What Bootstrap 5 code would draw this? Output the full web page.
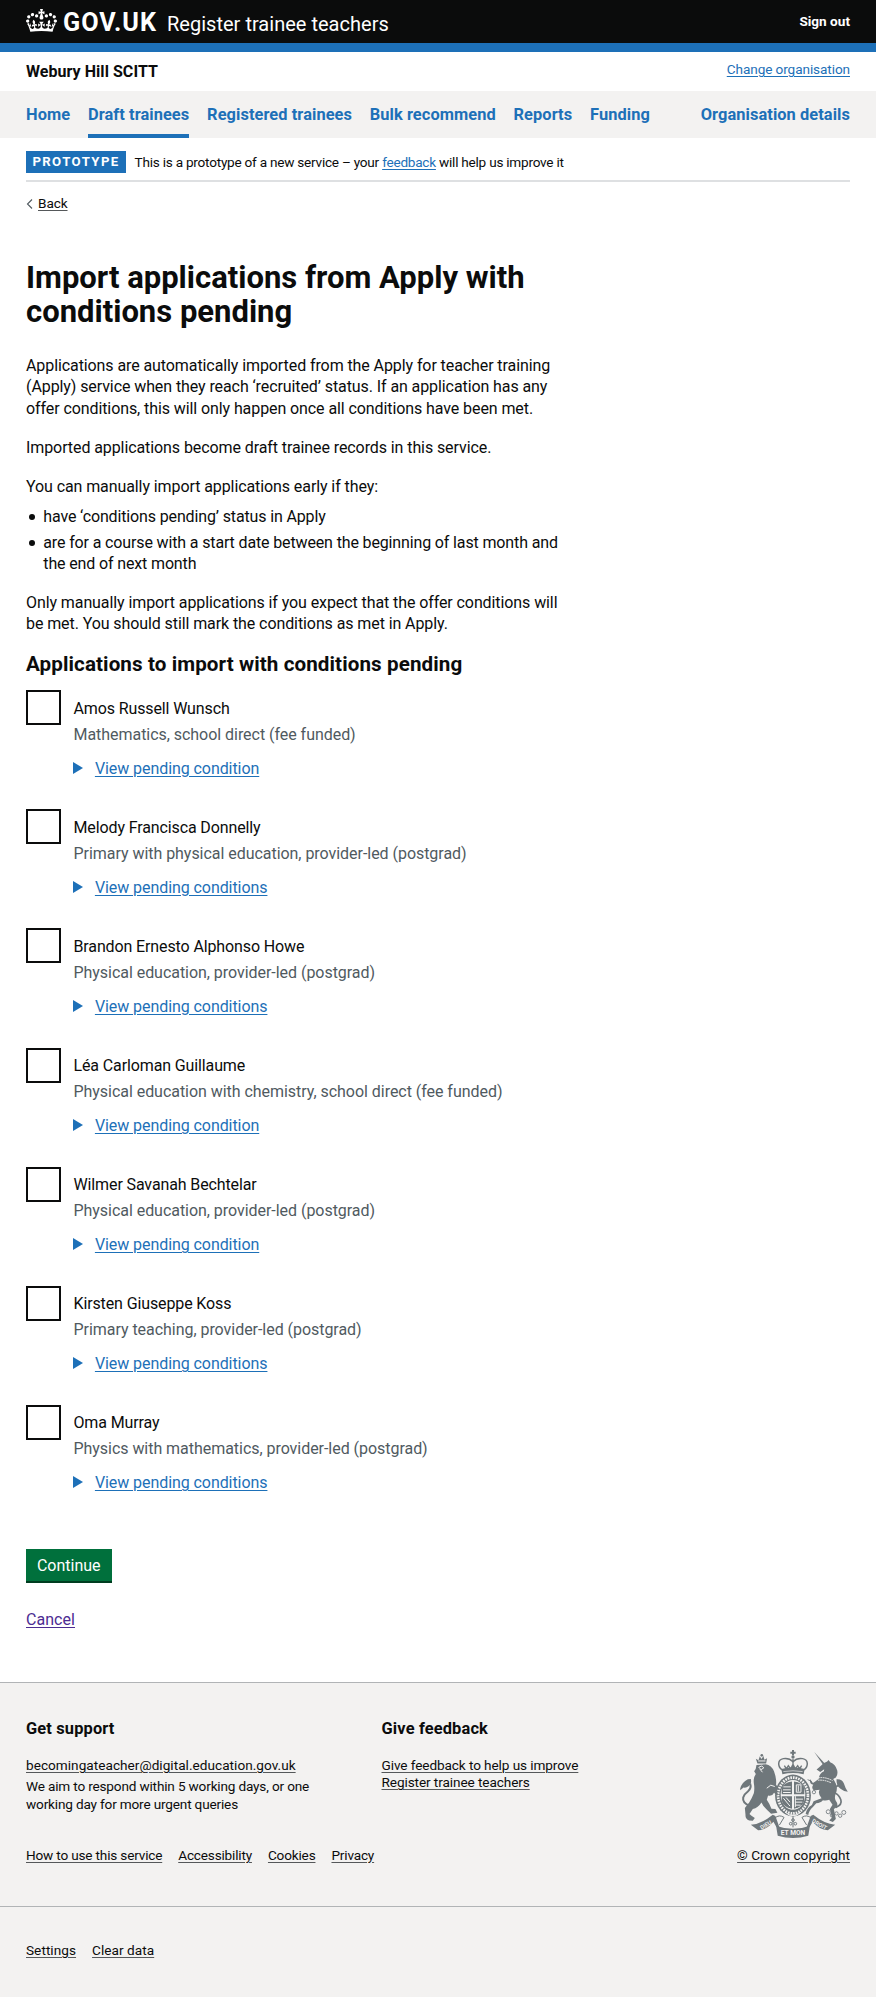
<!DOCTYPE html>
<html lang="en">
<head>
<meta charset="utf-8">
<meta name="viewport" content="width=device-width, initial-scale=1">
<title>Import applications from Apply with conditions pending</title>
<link href="https://cdn.jsdelivr.net/npm/bootstrap@5.3.0/dist/css/bootstrap.min.css" rel="stylesheet">
<style>
body{font-family:Roboto,"Liberation Sans",sans-serif;font-size:16px;line-height:21.5px;letter-spacing:-.09px;color:#0b0c0c;background:#fff}
a{color:#1d70b8;text-underline-offset:2px;text-decoration-thickness:1px}
.page{padding-left:26px;padding-right:26px}
.top-bar{background:#0b0c0c;height:52px;border-bottom:9px solid #1d70b8;color:#fff}
.crown{width:31px;height:23px;margin-top:9px}
.wordmark{font-size:25.2px;font-weight:700;line-height:30px;letter-spacing:1px;margin:7.5px 0 0 6px}
.service{font-size:20px;line-height:26px;letter-spacing:.02px;margin:11px 0 0 10px}
.signout{font-size:13.6px;letter-spacing:0;margin-top:11px;color:#fff;font-weight:700}
.org-bar{height:39px;padding-top:8.6px}
.org-name{letter-spacing:.05px}
.txt-sm{font-size:13.6px;line-height:17.2px}
.main-nav{background:#f3f2f1;height:46.5px;gap:17.8px}
.main-nav a{font-weight:700;font-size:16.4px;letter-spacing:.07px;text-decoration:none;padding-top:13px;white-space:nowrap}
.main-nav a.current{border-bottom:4px solid #1d70b8}
.phase{height:44.5px;border-bottom:2px solid #dee0e2;margin:0 26px}
.phase .tag{background:#1d70b8;color:#fff;font-weight:700;font-size:13.2px;letter-spacing:1.4px;height:21.5px;line-height:22px;width:100px;text-align:center;margin-top:13.5px}
.phase .txt-sm{letter-spacing:-.24px;margin:16px 0 0 8.6px}
.back{padding-top:13px}
.back svg{margin-right:5px}
.back a,.foot a{color:#0b0c0c;text-decoration-color:#55585a}
.content{width:545px;padding-top:48.4px}
.content h1{font-size:31px;line-height:34.4px;letter-spacing:0;font-weight:700;margin:0 0 25.5px}
.content p{margin:0 0 17.3px}
.bul{list-style:none;padding:0;margin:-8.6px 0 17.3px}
.bul li{padding-left:17.3px;position:relative;letter-spacing:-.14px}
.bul li+li{margin-top:4.3px}
.bul li::before{content:"";position:absolute;left:3px;top:8px;width:6px;height:6px;border-radius:50%;background:#0b0c0c}
.content h2{font-size:20.6px;line-height:25.8px;letter-spacing:.1px;font-weight:700;margin:0 0 12.5px}
.applicant{height:119.05px;gap:12.9px}
.applicant .form-check-input{width:34.6px;height:35px;border:2px solid #0b0c0c;border-radius:0;margin:0;flex:none}
.applicant label{padding-top:7.3px;letter-spacing:-.12px}
.hint{color:#505a5f;margin-top:4.5px;letter-spacing:-.04px}
.more{margin-top:12.7px;letter-spacing:-.07px}
.more svg{display:inline-block;margin:-3px 12.3px 0 -.9px}
.btn-go,.btn-go:hover{background:#00703c;color:#fff}
.btn-go{border:0;border-radius:0;box-shadow:inset 0 -2px 0 #003d20;height:34.5px;width:85.5px;margin-top:25px;padding:0;font-size:16px;letter-spacing:0;line-height:21.5px}
.cancel{margin-top:26px;margin-bottom:51.6px}
.cancel a{color:#4c2c92;letter-spacing:.05px}
.foot{background:#f3f2f1;border-top:1px solid #b1b4b6}
.foot h3{font-size:16.4px;font-weight:700;letter-spacing:.15px;line-height:21.5px;margin:0 0 17.7px}
.foot-main{padding-top:34.3px;padding-bottom:42px}
.col-support{width:355.5px}
.reply{margin-top:4.3px;letter-spacing:-.17px}
.foot-links{gap:16px;letter-spacing:-.18px}
.meta{margin-top:34px}
.crest{width:108px;height:88px;margin-bottom:8.5px}
.foot-end{border-top:1px solid #b1b4b6;padding-top:34.9px;padding-bottom:37.5px;letter-spacing:.05px}
</style>
</head>
<body>
<header>
  <div class="top-bar page d-flex justify-content-between">
    <div class="d-flex">
      <svg class="crown" viewBox="0 0 132 97" fill="#fff" preserveAspectRatio="none" aria-hidden="true"><path fill-rule="evenodd" d="M25 30.2c3.5 1.5 7.7-.2 9.1-3.7 1.5-3.6-.2-7.8-3.9-9.2-3.6-1.4-7.6.3-9.1 3.9-1.4 3.5.3 7.5 3.9 9zM9 39.5c3.6 1.5 7.8-.2 9.2-3.7 1.5-3.6-.2-7.8-3.9-9.1-3.6-1.5-7.6.2-9.1 3.8-1.4 3.5.3 7.5 3.8 9zM4.4 57.2c3.5 1.5 7.7-.2 9.1-3.8 1.5-3.6-.2-7.7-3.9-9.1-3.5-1.5-7.6.3-9.1 3.8-1.4 3.5.3 7.6 3.9 9.1zm38.3-21.4c3.5 1.5 7.7-.2 9.1-3.8 1.5-3.6-.2-7.7-3.9-9.1-3.6-1.5-7.6.3-9.1 3.8-1.3 3.6.4 7.7 3.9 9.1zm64.4-5.6c-3.6 1.5-7.8-.2-9.1-3.7-1.5-3.6.2-7.8 3.8-9.2 3.6-1.4 7.7.3 9.2 3.9 1.3 3.5-.4 7.5-3.9 9zm15.9 9.3c-3.6 1.5-7.7-.2-9.1-3.7-1.5-3.6.2-7.8 3.7-9.1 3.6-1.5 7.7.2 9.2 3.8 1.5 3.5-.3 7.5-3.8 9zm4.7 17.7c-3.6 1.5-7.8-.2-9.2-3.8-1.5-3.6.2-7.7 3.9-9.1 3.6-1.5 7.7.3 9.2 3.8 1.3 3.5-.4 7.6-3.9 9.1zM89.3 35.8c-3.6 1.5-7.8-.2-9.2-3.8-1.4-3.6.2-7.7 3.9-9.1 3.6-1.5 7.7.3 9.2 3.8 1.4 3.6-.3 7.7-3.9 9.1zM69.7 17.7l8.9 4.7V9.3l-8.9 2.8c-.2-.3-.5-.6-.9-.9L72.4 0H59.6l3.5 11.2c-.3.3-.6.5-.9.9l-8.8-2.8v13.1l8.8-4.7c.3.3.6.7.9.9l-5 15.4v.1c-.2.8-.4 1.6-.4 2.4 0 4.1 3.1 7.5 7 8.1h.2c.3 0 .7.1 1 .1.4 0 .7 0 1-.1h.2c4-.6 7.1-4.1 7.1-8.1 0-.8-.1-1.7-.4-2.4V34l-5.1-15.4c.4-.2.7-.6 1-.9zM66 92.8c16.9 0 32.8 1.1 47.1 3.2 4-16.9 8.9-26.7 14-33.5l-9.6-3.4c1 4.9 1.1 7.2 0 10.2-1.5-1.4-3-4.3-4.2-8.7L108.6 76c2.8-2 5-3.2 7.5-3.3-4.4 9.4-10 11.9-13.6 11.2-4.3-.8-6.3-4.6-5.6-7.9 1-4.7 5.7-5.9 8-.5 4.3-8.7-3-11.4-7.6-8.8 7.1-7.2 7.9-13.5 2.1-21.1-8 6.1-8.1 12.3-4.5 20.8-4.7-5.4-12.1-2.5-9.5 6.2 3.4-5.2 7.9-2 7.2 3.1-.6 4.3-6.4 7.8-13.5 7.2-10.3-.9-10.9-8-11.2-13.8 2.5-.5 7.1 1.8 11 7.3L80.2 60c-4.1 4.4-8 5.3-12.3 5.4 1.4-4.4 8-11.6 8-11.6H55.5s6.4 7.2 7.9 11.6c-4.2-.1-8-1-12.3-5.4l1.4 16.4c3.9-5.5 8.5-7.7 10.9-7.3-.3 5.8-.9 12.8-11.1 13.8-7.2.6-12.9-2.9-13.5-7.2-.7-5 3.8-8.3 7.1-3.1 2.7-8.7-4.6-11.6-9.4-6.2 3.7-8.5 3.6-14.7-4.6-20.8-5.8 7.6-5 13.9 2.2 21.1-4.7-2.6-11.9.1-7.7 8.8 2.3-5.5 7.1-4.2 8.1.5.7 3.3-1.3 7.1-5.7 7.9-3.5.7-9-1.8-13.5-11.2 2.5.1 4.7 1.3 7.5 3.3l-4.7-15.4c-1.2 4.4-2.7 7.2-4.3 8.7-1.1-3-.9-5.3 0-10.2l-9.5 3.4c5 6.9 9.9 16.7 14 33.5 14.8-2.1 30.8-3.2 47.7-3.2z"/></svg>
      <span class="wordmark">GOV.UK</span>
      <span class="service">Register trainee teachers</span>
    </div>
    <a href="#" class="signout text-decoration-none">Sign out</a>
  </div>
  <div class="org-bar page d-flex justify-content-between">
    <strong class="org-name">Webury Hill SCITT</strong>
    <a class="txt-sm" href="#">Change organisation</a>
  </div>
  <nav class="main-nav page d-flex">
    <a href="#">Home</a>
    <a href="#" class="current">Draft trainees</a>
    <a href="#">Registered trainees</a>
    <a href="#">Bulk recommend</a>
    <a href="#">Reports</a>
    <a href="#">Funding</a>
    <a href="#" class="ms-auto">Organisation details</a>
  </nav>
</header>

<div class="phase d-flex">
  <span class="tag">PROTOTYPE</span>
  <span class="txt-sm">This is a prototype of a new service – your <a href="#">feedback</a> will help us improve it</span>
</div>
<div class="page back txt-sm d-flex align-items-center">
  <svg width="7" height="10" viewBox="0 0 7 10" fill="none" stroke="#505a5f" stroke-width="1.1"><path d="M6 .5 1.5 5 6 9.5"/></svg><a href="#">Back</a>
</div>

<main class="page">
  <div class="content">
    <h1>Import applications from Apply with<br>conditions pending</h1>
    <p>Applications are automatically imported from the Apply for teacher training<br>(Apply) service when they reach ‘recruited’ status. If an application has any<br>offer conditions, this will only happen once all conditions have been met.</p>
    <p>Imported applications become draft trainee records in this service.</p>
    <p>You can manually import applications early if they:</p>
    <ul class="bul">
      <li>have ‘conditions pending’ status in Apply</li>
      <li>are for a course with a start date between the beginning of last month and<br>the end of next month</li>
    </ul>
    <p>Only manually import applications if you expect that the offer conditions will<br>be met. You should still mark the conditions as met in Apply.</p>
    <h2>Applications to import with conditions pending</h2>
  </div>

  <form>
    <div class="applicant d-flex"><input class="form-check-input" type="checkbox" id="a1"><div><label class="d-block" for="a1">Amos Russell Wunsch</label><div class="hint">Mathematics, school direct (fee funded)</div><div class="more"><svg width="10" height="12" viewBox="0 0 10 12" fill="#1d70b8"><path d="M0 0 10 6 0 12z"/></svg><a href="#">View pending condition</a></div></div></div>
    <div class="applicant d-flex"><input class="form-check-input" type="checkbox" id="a2"><div><label class="d-block" for="a2">Melody Francisca Donnelly</label><div class="hint">Primary with physical education, provider-led (postgrad)</div><div class="more"><svg width="10" height="12" viewBox="0 0 10 12" fill="#1d70b8"><path d="M0 0 10 6 0 12z"/></svg><a href="#">View pending conditions</a></div></div></div>
    <div class="applicant d-flex"><input class="form-check-input" type="checkbox" id="a3"><div><label class="d-block" for="a3">Brandon Ernesto Alphonso Howe</label><div class="hint">Physical education, provider-led (postgrad)</div><div class="more"><svg width="10" height="12" viewBox="0 0 10 12" fill="#1d70b8"><path d="M0 0 10 6 0 12z"/></svg><a href="#">View pending conditions</a></div></div></div>
    <div class="applicant d-flex"><input class="form-check-input" type="checkbox" id="a4"><div><label class="d-block" for="a4">Léa Carloman Guillaume</label><div class="hint">Physical education with chemistry, school direct (fee funded)</div><div class="more"><svg width="10" height="12" viewBox="0 0 10 12" fill="#1d70b8"><path d="M0 0 10 6 0 12z"/></svg><a href="#">View pending condition</a></div></div></div>
    <div class="applicant d-flex"><input class="form-check-input" type="checkbox" id="a5"><div><label class="d-block" for="a5">Wilmer Savanah Bechtelar</label><div class="hint">Physical education, provider-led (postgrad)</div><div class="more"><svg width="10" height="12" viewBox="0 0 10 12" fill="#1d70b8"><path d="M0 0 10 6 0 12z"/></svg><a href="#">View pending condition</a></div></div></div>
    <div class="applicant d-flex"><input class="form-check-input" type="checkbox" id="a6"><div><label class="d-block" for="a6">Kirsten Giuseppe Koss</label><div class="hint">Primary teaching, provider-led (postgrad)</div><div class="more"><svg width="10" height="12" viewBox="0 0 10 12" fill="#1d70b8"><path d="M0 0 10 6 0 12z"/></svg><a href="#">View pending conditions</a></div></div></div>
    <div class="applicant d-flex"><input class="form-check-input" type="checkbox" id="a7"><div><label class="d-block" for="a7">Oma Murray</label><div class="hint">Physics with mathematics, provider-led (postgrad)</div><div class="more"><svg width="10" height="12" viewBox="0 0 10 12" fill="#1d70b8"><path d="M0 0 10 6 0 12z"/></svg><a href="#">View pending conditions</a></div></div></div>
    <button type="button" class="btn btn-go d-block">Continue</button>
    <div class="cancel"><a href="#">Cancel</a></div>
  </form>
</main>

<footer class="foot txt-sm">
  <div class="foot-main page d-flex justify-content-between align-items-end">
    <div>
      <div class="d-flex">
        <div class="col-support">
          <h3>Get support</h3>
          <a class="d-block" href="#" style="letter-spacing:.03px">becomingateacher@digital.education.gov.uk</a>
          <div class="reply">We aim to respond within 5 working days, or one<br>working day for more urgent queries</div>
        </div>
        <div>
          <h3>Give feedback</h3>
          <a href="#">Give feedback to help us improve<br>Register trainee teachers</a>
        </div>
      </div>
      <div class="meta foot-links d-flex"><a href="#">How to use this service</a><a href="#">Accessibility</a><a href="#">Cookies</a><a href="#">Privacy</a></div>
    </div>
    <div class="d-flex flex-column align-items-center">
      <svg class="crest" viewBox="28 33 324 265" fill="#6f777b" stroke="none" aria-hidden="true">
        <!-- royal crown -->
        <path d="M184 33h6v5h5v6h-5v5h-6v-5h-5v-6h5z"/><circle cx="187" cy="54" r="5"/>
        <path d="M154 93C140 82 140 62 158 59c12-2 22 2 29 9 7-7 17-11 29-9 18 3 18 23 4 34" fill="none" stroke="#6f777b" stroke-width="4.5"/>
        <path d="M187 60v30M161 80l6 10 6-10 7 10 7-14 7 14 7-10 6 10 6-10" fill="none" stroke="#6f777b" stroke-width="4"/>
        <path d="M152 90q35-8 70 0l-3 16q-32-7-64 0z"/><path d="M158 98q29-5 58 0" fill="none" stroke="#f3f2f1" stroke-width="2"/>
        <!-- garter and quartered shield -->
        <ellipse cx="187" cy="170" rx="54" ry="63"/>
        <ellipse cx="187" cy="170" rx="45" ry="54" fill="none" stroke="#f3f2f1" stroke-width="8" stroke-dasharray="5 3"/>
        <ellipse cx="187" cy="168" rx="37" ry="45" fill="#f3f2f1"/>
        <path d="M153 166V148q6-17 31-20v38zM190 128q25 3 31 20v18h-31zM153 172h31v38q-25-4-31-24zM190 172h31v14q-6 20-31 24z"/>
        <path d="M158 144h22M157 153h23M157 161h23M194 172v33M158 178l20 24M166 176l12 14M194 181h23M194 190h21M194 199h16" stroke="#f3f2f1" stroke-width="3"/>
        <path d="M197 138h14v22h-14zM203 140v18" fill="none" stroke="#f3f2f1" stroke-width="3"/>
        <path d="M163 220q24 22 48 0M176 229h22" fill="none" stroke="#f3f2f1" stroke-width="3"/>
        <!-- lion -->
        <path d="M75 59l8 5 4-12 5 8 6-9 3 11 8-4-3 16H80z"/><circle cx="93" cy="49" r="4"/><path d="M82 66h22" stroke="#f3f2f1" stroke-width="3"/>
        <path d="M77 78 105 76Q122 78 130 98Q138 120 136 137L146 154 136 150Q144 164 139 171L130 162Q125 173 112 170L108 183Q117 196 122 210L134 211 140 222 121 225Q111 217 98 202L92 191Q82 207 66 211L56 226 62 231 72 238 66 246 55 245Q43 240 44 229L42 208 55 191Q63 179 69 163 72 149 69 133Q67 116 75 105L70 97Q76 91 77 78z"/>
        <path d="M56 201q-22-9-19-25 2-9 14-18 12-10 7-24" fill="none" stroke="#6f777b" stroke-width="6"/><path d="M28 149Q33 130 51 121l9-1Q64 133 53 142q-7 6-15 4l-10 8z"/>
        <path d="M84 85l9-4 6 6-8 5zM108 148l12-9 12 4M87 90l8 10" fill="none" stroke="#f3f2f1" stroke-width="3"/>
        <!-- unicorn -->
        <path d="M251 39 282 73 278 78z"/>
        <path d="M279 73l11-5 4-5 5 7Q315 76 320 94q3 13-4 22l-8 4Q325 143 316 163q-5 11-1 21 8 10 5 21l-10 6 6 30-9 9-11-5 8-8-6-26 8-13-10-15Q285 187 277 184q-6 8-20 9l-10 12Q235 215 233 229l-8-3q4-20 19-27l5-12 24-9q-12-13-6-25l-17 2q-9-8-2-17-12-2-10-18l9 12 7-4 10-8q2-16 16-23l1-6-12 8-11-7 9-8z"/>
        <path d="M263 117q20-4 43 8M262 124q20-2 40 8" fill="none" stroke="#f3f2f1" stroke-width="3" stroke-dasharray="5 2"/>
        <path d="M316 206q20-8 15-23-6-15-15-19-10-8 0-20 10-8 14-2" fill="none" stroke="#6f777b" stroke-width="5"/><path d="M318 121q16-2 22 12 5 16 12 26-11 0-22-9-13-9-12-29z"/>
        <g fill="none" stroke="#6f777b" stroke-width="2.5"><circle cx="293" cy="219" r="6"/><circle cx="305" cy="229" r="6"/><circle cx="318" cy="224" r="5"/><circle cx="329" cy="231" r="5"/><circle cx="340" cy="221" r="6"/><circle cx="250" cy="160" r="5"/><path d="M243 128l-12-6"/></g>
        <!-- motto ribbon -->
        <path d="M60 258q32-2 66-30l8 4 12 34-9-1-9-16Q108 273 82 275z"/>
        <path d="M314 258q-32-2-66-30l-8 4-12 34 9-1 9-16q20 24 46 26z"/>
        <path d="M136 261q51 19 102 0l-5 30q-46 14-92 0z"/>
        <g fill="none" stroke="#6f777b" stroke-width="3"><circle cx="187" cy="244" r="4"/><circle cx="180" cy="255" r="4"/><circle cx="194" cy="255" r="4"/><path d="M187 232v34M132 238q14-12 28-2l-14 23M242 238q-14-12-28-2l14 23"/></g>
        <g fill="#f3f2f1" font-family="Roboto,sans-serif" font-weight="700" text-anchor="middle" letter-spacing="0"><text font-size="20" x="187" y="290">ET MON</text><text font-size="17" transform="translate(108 264) rotate(-29)">DIEU</text><text font-size="17" transform="translate(264 262) rotate(29)">DROIT</text></g>
      </svg>
      <a href="#" style="letter-spacing:.02px">© Crown copyright</a>
    </div>
  </div>
  <div class="foot-end foot-links page d-flex"><a href="#">Settings</a><a href="#">Clear data</a></div>
</footer>
<script src="https://cdn.jsdelivr.net/npm/bootstrap@5.3.0/dist/js/bootstrap.bundle.min.js"></script>
</body>
</html>
